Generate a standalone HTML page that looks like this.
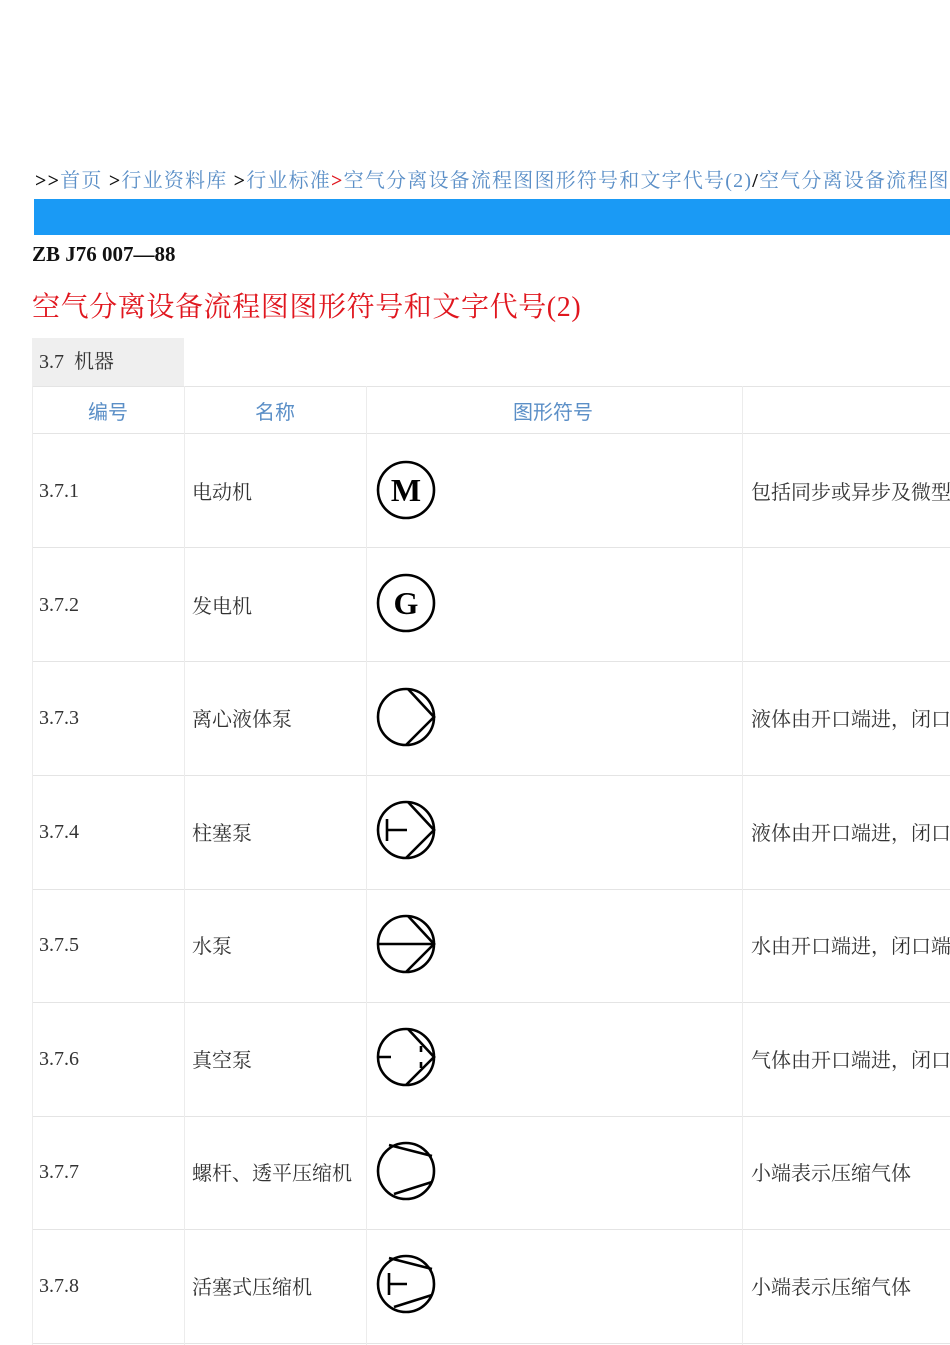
<!DOCTYPE html>
<html><head><meta charset="utf-8"><style>
body{margin:0;width:950px;height:1345px;background:#fff;overflow:hidden;position:relative;font-family:"Liberation Serif","Noto Serif CJK SC",serif;}
.a{position:absolute;white-space:nowrap;}
.bc{left:35px;top:164px;font-size:20px;color:#5b8fc7;letter-spacing:1.2px;font-family:"Liberation Serif","Noto Serif CJK SC",serif;}
.bc b{color:#111;font-weight:bold}
.bc .r{color:#e0161e;font-weight:bold}
.bar{left:34px;top:199px;width:916px;height:36px;background:#1a9af5;}
.zb{left:32px;top:242px;font-size:21px;font-weight:bold;color:#111;}
.tt{left:32px;top:285px;font-size:28px;color:#e0161e;letter-spacing:0.6px;font-family:"Liberation Serif","Noto Serif CJK SC",serif;}
.sec{left:32px;top:338px;width:152px;height:48px;background:#efefef;font-size:20px;color:#333;line-height:48px;text-indent:7px;font-family:"Liberation Serif","Noto Serif CJK SC",serif;}
.hl{position:absolute;height:1px;background:#e4e4e4;left:32px;width:918px;}
.vl{position:absolute;width:1px;background:#ececec;top:386px;height:959px;}
.h{top:396px;font-size:20px;color:#5b8fc7;font-family:"Liberation Sans","Noto Sans CJK SC",sans-serif;}
.c{font-size:20px;color:#333;font-family:"Liberation Serif","Noto Serif CJK SC",serif;}
.n{font-size:20px;color:#333;margin-top:3px}
svg{position:absolute;left:375px;}
</style></head><body>
<div class="a bc"><b>&gt;&gt;</b>首页 <b>&gt;</b>行业资料库 <b>&gt;</b>行业标准<span class="r">&gt;</span>空气分离设备流程图图形符号和文字代号(2)<b>/</b>空气分离设备流程图</div>
<div class="a bar"></div>
<div class="a zb">ZB J76 007—88</div>
<div class="a tt">空气分离设备流程图图形符号和文字代号(2)</div>
<div class="a sec">3.7&nbsp; 机器</div>
<div class="hl" style="top:386px"></div>
<div class="hl" style="top:433px"></div>
<div class="hl" style="top:547px"></div>
<div class="hl" style="top:661px"></div>
<div class="hl" style="top:775px"></div>
<div class="hl" style="top:889px"></div>
<div class="hl" style="top:1002px"></div>
<div class="hl" style="top:1116px"></div>
<div class="hl" style="top:1229px"></div>
<div class="hl" style="top:1343px"></div>
<div class="vl" style="left:32px"></div>
<div class="vl" style="left:184px"></div>
<div class="vl" style="left:366px"></div>
<div class="vl" style="left:742px"></div>
<div class="a h" style="left:88px">编号</div>
<div class="a h" style="left:255px">名称</div>
<div class="a h" style="left:513px">图形符号</div>

<div class="a c n" style="left:39px;top:477px">3.7.1</div><div class="a c" style="left:192px;top:476px">电动机</div><div class="a c" style="left:751px;top:476px">包括同步或异步及微型</div>
<div class="a c n" style="left:39px;top:591px">3.7.2</div><div class="a c" style="left:192px;top:590px">发电机</div>
<div class="a c n" style="left:39px;top:704px">3.7.3</div><div class="a c" style="left:192px;top:703px">离心液体泵</div><div class="a c" style="left:751px;top:703px">液体由开口端进，闭口</div>
<div class="a c n" style="left:39px;top:818px">3.7.4</div><div class="a c" style="left:192px;top:817px">柱塞泵</div><div class="a c" style="left:751px;top:817px">液体由开口端进，闭口</div>
<div class="a c n" style="left:39px;top:931px">3.7.5</div><div class="a c" style="left:192px;top:930px">水泵</div><div class="a c" style="left:751px;top:930px">水由开口端进，闭口端</div>
<div class="a c n" style="left:39px;top:1045px">3.7.6</div><div class="a c" style="left:192px;top:1044px">真空泵</div><div class="a c" style="left:751px;top:1044px">气体由开口端进，闭口</div>
<div class="a c n" style="left:39px;top:1158px">3.7.7</div><div class="a c" style="left:192px;top:1157px">螺杆、透平压缩机</div><div class="a c" style="left:751px;top:1157px">小端表示压缩气体</div>
<div class="a c n" style="left:39px;top:1272px">3.7.8</div><div class="a c" style="left:192px;top:1271px">活塞式压缩机</div><div class="a c" style="left:751px;top:1271px">小端表示压缩气体</div>

<svg style="top:459px" width="62" height="62" viewBox="0 0 62 62"><circle cx="31" cy="31" r="28" fill="none" stroke="#000" stroke-width="2.6"/><text x="31" y="42" text-anchor="middle" font-family="Liberation Serif" font-weight="bold" font-size="32">M</text></svg>
<svg style="top:572px" width="62" height="62" viewBox="0 0 62 62"><circle cx="31" cy="31" r="28" fill="none" stroke="#000" stroke-width="2.6"/><text x="31" y="42" text-anchor="middle" font-family="Liberation Serif" font-weight="bold" font-size="32">G</text></svg>
<svg style="top:686px" width="62" height="62" viewBox="0 0 62 62" fill="none" stroke="#000" stroke-width="2.6"><circle cx="31" cy="31" r="28"/><path d="M33 3 L59 31 L31 59"/></svg>
<svg style="top:799px" width="62" height="62" viewBox="0 0 62 62" fill="none" stroke="#000" stroke-width="2.6"><circle cx="31" cy="31" r="28"/><path d="M33 3 L59 31 L31 59 M12 20 V42 M12 31 H32"/></svg>
<svg style="top:913px" width="62" height="62" viewBox="0 0 62 62" fill="none" stroke="#000" stroke-width="2.6"><circle cx="31" cy="31" r="28"/><path d="M33 3 L59 31 L31 59 M3 31 H59"/></svg>
<svg style="top:1026px" width="62" height="62" viewBox="0 0 62 62" fill="none" stroke="#000" stroke-width="2.6"><circle cx="31" cy="31" r="28"/><path d="M33 3 L59 31 L31 59 M3 31 H16 M46 20 V26 M46 36 V42"/></svg>
<svg style="top:1140px" width="62" height="62" viewBox="0 0 62 62" fill="none" stroke="#000" stroke-width="2.6"><circle cx="31" cy="31" r="28"/><path d="M14 5 L57 16 M19 54 L57 42"/></svg>
<svg style="top:1253px" width="62" height="62" viewBox="0 0 62 62" fill="none" stroke="#000" stroke-width="2.6"><circle cx="31" cy="31" r="28"/><path d="M14 5 L57 16 M19 54 L57 42 M14 20 V42 M14 31 H32"/></svg>
</body></html>
